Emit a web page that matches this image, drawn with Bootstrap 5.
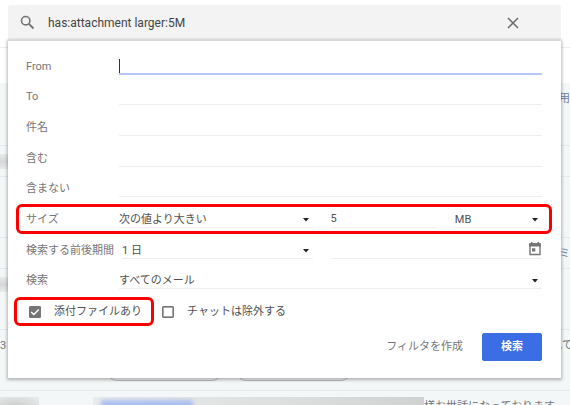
<!DOCTYPE html>
<html lang="ja">
<head>
<meta charset="utf-8">
<meta name="viewport" content="width=device-width, initial-scale=1">
<title>メール検索</title>
<link rel="stylesheet" href="https://cdn.jsdelivr.net/npm/bootstrap@5.3.0/dist/css/bootstrap.min.css">
<style>
body { font-family: Roboto, "Noto Sans CJK JP", sans-serif; font-size: 11px; line-height: 16px; color: #505050; background: #fff; }
.mail-page { isolation: isolate; padding: 5px 9px 0 8px; }
.mail-list { inset: 0; z-index: -1; padding-top: 47px; color: #71777d; font-size: 11px; }
.mail-row { flex: none; height: 61px; border-bottom: 1px solid #e6eaee; background: #f4f7f7; padding: 8px 0 0; }
.mail-row.slim { height: 31px; }
.mail-row.blank { height: 36px; background: #fff; border-top: 1px solid #eee; border-bottom: 0; }
.mail-row.tall { height: 63px; }
.mail-row.open-end { height: 40px; border: 0; padding: 6px 0 0; }
.row-end { width: 11px; white-space: nowrap; }
.row-end.wide { width: 19px; }
.row-link { color: #6a83a8; }
.redacted { width: 12px; height: 15px; background: linear-gradient(#e9ebeb, #d6d8da, #e9ebeb); }
.chip-row { gap: 14px; padding: 0 0 9px 107px; }
.chip { width: 115px; height: 20px; border: 1px solid #bbbdbe; border-radius: 10px; }
.smear-a { width: 39px; height: 20px; background: radial-gradient(ellipse at 40% 50%, #c9caca, #e8eaea 90%); margin-right: 54px; }
.smear-b { width: 331px; height: 20px; background: linear-gradient(90deg, #e9ecec, #dcdede 60%, #d0d2d2); }
.smear-link { width: 92px; height: 20px; margin: 3px 0 0 8px; background: #a9bff1; filter: blur(2px); }
.greeting { padding-top: 2px; white-space: nowrap; overflow: hidden; }
.search-bar { height: 35px; background: #f3f3f3; border-radius: 3px 3px 0 0; padding: 0 42px 0 12px; }
.search-bar input { font-size: 12px; color: #444; margin-left: 13px; }
.plain { border: 0; background: none; padding: 0; outline: 0; min-width: 0; border-radius: 0; color: inherit; }
.options { background: #fff; padding: 3px 19px 17px 18px; border-top: 1px solid #d8d8d8; box-shadow: 0 1px 3px 1px rgba(0,0,0,.28); }
.option-grid { display: grid; grid-auto-rows: 1fr; min-height: 276px; }
.option-line { padding-top: 12px; }
.option-line > label:first-child { width: 93px; flex: none; color: #757575; white-space: nowrap; }
.field { height: 18px; line-height: 16px; border-bottom: 1px solid #efefef; }
.field.active { border-bottom: 2px solid #b7c8f7; }
.cursor-field::before { content: ""; position: absolute; left: 0; top: 2px; width: 1px; height: 14px; background: #333; }
select.field { appearance: none; padding-top: 2px; background: url("data:image/svg+xml,%3Csvg xmlns='http://www.w3.org/2000/svg' width='6' height='4'%3E%3Cpath d='M0 0h6L3 3.5z' fill='%23222'/%3E%3C/svg%3E") no-repeat right 4px top 8px; }
.pair { gap: 18px; }
.amount { flex: 106 1 0; }
.compare { flex: 193 1 0; }
.unit { flex: 87 1 0; }
.period { flex: 191 1 0; margin-left: 3px; }
.date { flex: 210 1 0; }
.marked::after { content: ""; position: absolute; border: 3px solid #fb0000; border-radius: 6px; pointer-events: none; }
.mark-line::after { inset: 7px -10px -6px -10px; }
.mark-check::after { inset: -7px -12px -6px -15px; }
.tick-line { padding: 12px 0 0 3px; gap: 20px; }
.tick { gap: 13px; height: 16px; white-space: nowrap; }
.tick input { appearance: none; width: 12px; height: 12px; margin: 0; border: 1px solid #757575; border-radius: 1px; box-shadow: inset 0 0 0 1px #a9a9a9; }
.tick input:checked { box-shadow: none; background: #757575 url("data:image/svg+xml,%3Csvg xmlns='http://www.w3.org/2000/svg' viewBox='0 0 10 10'%3E%3Cpath d='M1.2 5l2.6 2.6L8.8 2.5' fill='none' stroke='%23fff' stroke-width='1.4'/%3E%3C/svg%3E") center / 10px; }
.actions { gap: 19px; padding-top: 13px; }
.btn-filter { color: #757575; }
.btn-search { --bs-btn-color: #fff; --bs-btn-bg: #3b6ee4; --bs-btn-hover-color: #fff; --bs-btn-hover-bg: #315fcb; --bs-btn-border-color: #3b6ee4; --bs-btn-font-size: 11px; --bs-btn-padding-y: 5px; --bs-btn-padding-x: 18px; --bs-btn-border-radius: 2px; --bs-btn-font-weight: 700; line-height: 16px; }
</style>
<script src="https://cdn.jsdelivr.net/npm/bootstrap@5.3.0/dist/js/bootstrap.bundle.min.js"></script>
</head>
<body>
<div class="mail-page position-relative min-vh-100 overflow-hidden">
  <div class="mail-list position-absolute d-flex flex-column overflow-hidden">
    <div class="mail-row blank"></div>
    <div class="mail-row tall d-flex justify-content-end"><span class="row-end row-link">用</span></div>
    <div class="mail-row slim"><div class="redacted"></div></div>
    <div class="mail-row"></div>
    <div class="mail-row slim d-flex justify-content-end"><span class="row-end row-link">ミ</span></div>
    <div class="mail-row"><div class="redacted"></div></div>
    <div class="mail-row d-flex flex-column justify-content-between">
      <div class="d-flex justify-content-between"><span>3</span><span class="row-end wide">れて</span></div>
      <div class="chip-row d-flex"><span class="chip"></span><span class="chip"></span></div>
    </div>
    <div class="mail-row open-end d-flex">
      <div class="smear-a flex-shrink-0"></div>
      <div class="smear-b flex-shrink-0 overflow-hidden"><div class="smear-link"></div></div>
      <span class="greeting">様お世話になっております。</span>
    </div>
  </div>

  <form onsubmit="return false">
    <div class="search-bar d-flex align-items-center">
      <svg width="15" height="15" viewBox="0 0 15 15" fill="none" stroke="#757575" stroke-width="1.6" aria-hidden="true"><circle cx="5.7" cy="5.7" r="4.2"/><path d="M8.9 8.9l4.6 4.6" stroke-width="2"/></svg>
      <input class="plain flex-grow-1" type="text" aria-label="メールを検索" value="has:attachment larger:5M">
      <button class="plain d-flex" type="button" aria-label="閉じる"><svg width="12" height="12" viewBox="0 0 12 12" stroke="#6a6a6a" stroke-width="1.5"><path d="M1 1l10 10M11 1L1 11"/></svg></button>
    </div>

    <div class="options">
      <div class="option-grid">
        <div class="option-line d-flex align-items-end"><label for="from">From</label><div class="cursor-field position-relative flex-grow-1 d-flex"><input id="from" class="plain field active w-100" type="text"></div></div>
        <div class="option-line d-flex align-items-end"><label for="to">To</label><input id="to" class="plain field flex-grow-1" type="text"></div>
        <div class="option-line d-flex align-items-end"><label for="subject">件名</label><input id="subject" class="plain field flex-grow-1" type="text"></div>
        <div class="option-line d-flex align-items-end"><label for="has">含む</label><input id="has" class="plain field flex-grow-1" type="text"></div>
        <div class="option-line d-flex align-items-end"><label for="hasnot">含まない</label><input id="hasnot" class="plain field flex-grow-1" type="text"></div>
        <div class="option-line marked mark-line position-relative d-flex align-items-end">
          <label for="compare">サイズ</label>
          <div class="pair d-flex flex-grow-1">
            <select id="compare" class="plain field compare"><option>次の値より大きい</option></select>
            <input class="plain field amount" type="text" value="5" aria-label="サイズの値">
            <select class="plain field unit" aria-label="単位"><option>MB</option></select>
          </div>
        </div>
        <div class="option-line d-flex align-items-end">
          <label for="period">検索する前後期間</label>
          <div class="pair d-flex flex-grow-1">
            <select id="period" class="plain field period"><option>1 日</option></select>
            <div class="field date d-flex justify-content-end">
              <input class="plain flex-grow-1" type="text" aria-label="日付">
              <svg width="14" height="15" viewBox="0 0 14 15" aria-hidden="true"><path d="M2 3h10v10.5H2z" fill="none" stroke="#757575" stroke-width="1.4"/><path d="M1.3 2.2h11.4v3.3H1.3zM3 1h1.5v2H3zM9.5 1H11v2H9.5zM4 7.2h3.3v3.3H4z" fill="#757575"/></svg>
            </div>
          </div>
        </div>
        <div class="option-line d-flex align-items-end"><label for="scope">検索</label><select id="scope" class="plain field flex-grow-1"><option>すべてのメール</option></select></div>
        <div class="tick-line d-flex align-items-end">
          <label class="tick marked mark-check position-relative d-flex align-items-center"><input type="checkbox" checked>添付ファイルあり</label>
          <label class="tick d-flex align-items-center"><input type="checkbox">チャットは除外する</label>
        </div>
      </div>
      <div class="actions d-flex justify-content-end">
        <button class="plain btn-filter" type="button">フィルタを作成</button>
        <button class="btn btn-search" type="submit">検索</button>
      </div>
    </div>
  </form>
</div>
</body>
</html>
